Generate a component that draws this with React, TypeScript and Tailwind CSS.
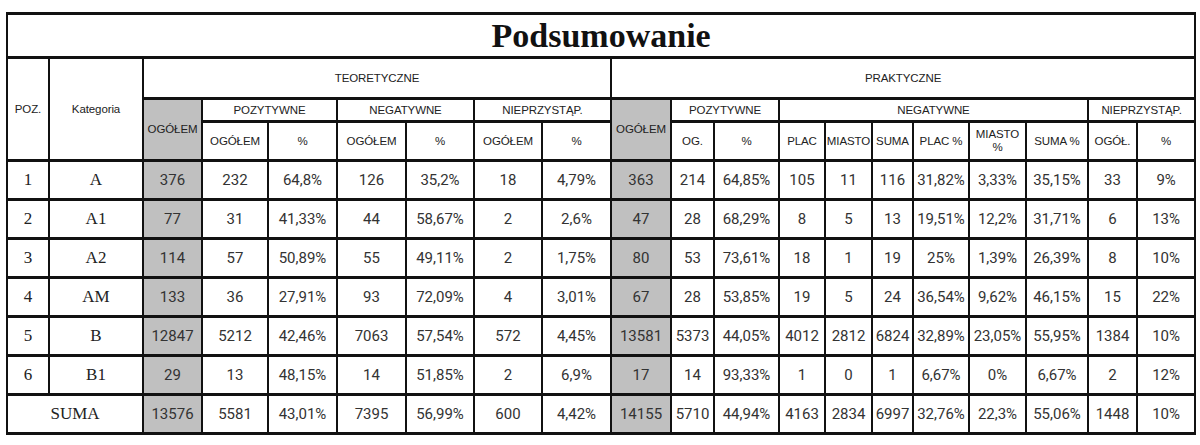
const cols = [42, 94, 59, 66, 69, 69, 68, 68, 69, 60, 43, 65, 46, 47, 41, 56, 57, 62, 49, 58];

// indexes of the two "OGÓŁEM" total columns (shaded)
const shaded = new Set([2, 9]);

const rows: string[][] = [
  ['1', 'A', '376', '232', '64,8%', '126', '35,2%', '18', '4,79%', '363', '214', '64,85%', '105', '11', '116', '31,82%', '3,33%', '35,15%', '33', '9%'],
  ['2', 'A1', '77', '31', '41,33%', '44', '58,67%', '2', '2,6%', '47', '28', '68,29%', '8', '5', '13', '19,51%', '12,2%', '31,71%', '6', '13%'],
  ['3', 'A2', '114', '57', '50,89%', '55', '49,11%', '2', '1,75%', '80', '53', '73,61%', '18', '1', '19', '25%', '1,39%', '26,39%', '8', '10%'],
  ['4', 'AM', '133', '36', '27,91%', '93', '72,09%', '4', '3,01%', '67', '28', '53,85%', '19', '5', '24', '36,54%', '9,62%', '46,15%', '15', '22%'],
  ['5', 'B', '12847', '5212', '42,46%', '7063', '57,54%', '572', '4,45%', '13581', '5373', '44,05%', '4012', '2812', '6824', '32,89%', '23,05%', '55,95%', '1384', '10%'],
  ['6', 'B1', '29', '13', '48,15%', '14', '51,85%', '2', '6,9%', '17', '14', '93,33%', '1', '0', '1', '6,67%', '0%', '6,67%', '2', '12%'],
];

const suma = ['13576', '5581', '43,01%', '7395', '56,99%', '600', '4,42%', '14155', '5710', '44,94%', '4163', '2834', '6997', '32,76%', '22,3%', '55,06%', '1448', '10%'];

const cell = 'border-x-2 border-y-[3px] border-[#111] text-center align-middle p-0';
const head = `${cell} font-['Liberation_Sans',Arial,sans-serif] text-[11.5px] text-[#222] leading-[13px] tracking-[-0.1px]`;
const num = `${cell} font-['Roboto',sans-serif] text-[15px] text-[#333]`;
const serif = `${cell} font-['Liberation_Serif','Times_New_Roman',serif] text-[17px] text-[#222]`;
const gray = 'bg-[#c0c0c0]';

const App = () => {
  return (
    <div className="w-[1200px] h-[445px] bg-white pt-[12px] pl-[6px] overflow-hidden">
      <table className="table-fixed border-collapse w-[1190px]">
        <colgroup>
          {cols.map((w, i) => (
            <col key={i} style={{ width: w }} />
          ))}
        </colgroup>
        <tbody>
          {/* title */}
          <tr className="h-[44px]">
            <td colSpan={20} className={`${cell} font-['Liberation_Serif','Times_New_Roman',serif] font-bold text-[34px] text-[#111] leading-none pt-[1px]`}>
              Podsumowanie
            </td>
          </tr>

          {/* header */}
          <tr className="h-[41px]">
            <td rowSpan={3} className={head}>POZ.</td>
            <td rowSpan={3} className={head}>Kategoria</td>
            <td colSpan={7} className={head}>TEORETYCZNE</td>
            <td colSpan={13} className={head}>PRAKTYCZNE</td>
          </tr>
          <tr className="h-[23px]">
            <td rowSpan={2} className={`${head} ${gray}`}>OGÓŁEM</td>
            <td colSpan={2} className={head}>POZYTYWNE</td>
            <td colSpan={2} className={head}>NEGATYWNE</td>
            <td colSpan={2} className={head}>NIEPRZYSTĄP.</td>
            <td rowSpan={2} className={`${head} ${gray}`}>OGÓŁEM</td>
            <td colSpan={2} className={head}>POZYTYWNE</td>
            <td colSpan={6} className={head}>NEGATYWNE</td>
            <td colSpan={2} className={head}>NIEPRZYSTĄP.</td>
          </tr>
          <tr className="h-[39px]">
            <td className={head}>OGÓŁEM</td>
            <td className={head}>%</td>
            <td className={head}>OGÓŁEM</td>
            <td className={head}>%</td>
            <td className={head}>OGÓŁEM</td>
            <td className={head}>%</td>
            <td className={head}>OG.</td>
            <td className={head}>%</td>
            <td className={head}>PLAC</td>
            <td className={head}>MIASTO</td>
            <td className={head}>SUMA</td>
            <td className={head}>PLAC %</td>
            <td className={head}>
              MIASTO
              <br />%
            </td>
            <td className={head}>SUMA %</td>
            <td className={head}>OGÓŁ.</td>
            <td className={head}>%</td>
          </tr>

          {/* data */}
          {rows.map((r) => (
            <tr key={r[0]} className="h-[39px]">
              {r.map((v, i) =>
                i < 2 ? (
                  <td key={i} className={serif}>{v}</td>
                ) : (
                  <td key={i} className={`${num} ${shaded.has(i) ? gray : ''}`}>{v}</td>
                )
              )}
            </tr>
          ))}

          <tr className="h-[39px]">
            <td colSpan={2} className={serif}>SUMA</td>
            {suma.map((v, i) => (
              <td key={i} className={`${num} ${shaded.has(i + 2) ? gray : ''}`}>{v}</td>
            ))}
          </tr>
        </tbody>
      </table>
    </div>
  );
};

export default App;
